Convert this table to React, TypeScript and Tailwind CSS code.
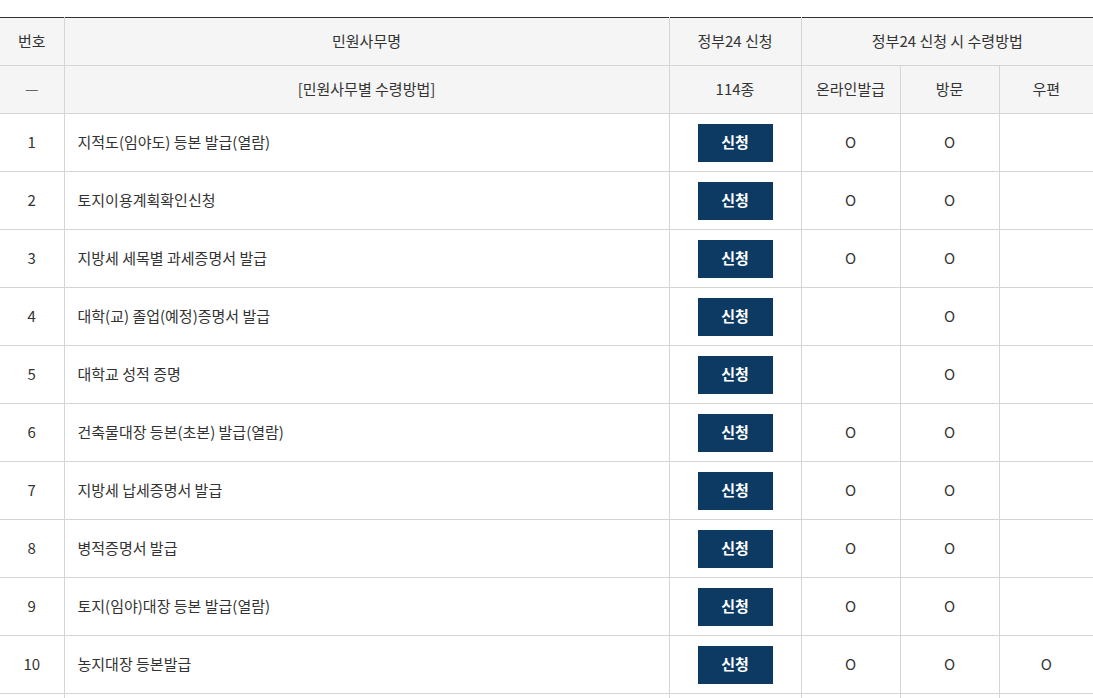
import React from 'react';

type Row = { no: number; name: string; online: boolean; visit: boolean; post: boolean };

const rows: Row[] = [
  { no: 1, name: '지적도(임야도) 등본 발급(열람)', online: true, visit: true, post: false },
  { no: 2, name: '토지이용계획확인신청', online: true, visit: true, post: false },
  { no: 3, name: '지방세 세목별 과세증명서 발급', online: true, visit: true, post: false },
  { no: 4, name: '대학(교) 졸업(예정)증명서 발급', online: false, visit: true, post: false },
  { no: 5, name: '대학교 성적 증명', online: false, visit: true, post: false },
  { no: 6, name: '건축물대장 등본(초본) 발급(열람)', online: true, visit: true, post: false },
  { no: 7, name: '지방세 납세증명서 발급', online: true, visit: true, post: false },
  { no: 8, name: '병적증명서 발급', online: true, visit: true, post: false },
  { no: 9, name: '토지(임야)대장 등본 발급(열람)', online: true, visit: true, post: false },
  { no: 10, name: '농지대장 등본발급', online: true, visit: true, post: true },
  { no: 11, name: '주민등록표 등본(초본) 교부', online: true, visit: true, post: false },
];

const th = 'border border-[#d5d5d5] bg-[#f5f5f5] font-normal text-[15px] text-[#333] text-center h-[48px] p-0';
const td = 'border border-[#d5d5d5] text-[15px] text-[#333] h-[58px] p-0';

export default function App() {
  return (
    <div className="w-[1093px] bg-white pt-[17px] font-['Noto_Sans_CJK_KR','Noto_Sans',sans-serif] overflow-hidden">
      <table className="w-[1093px] table-fixed border-collapse border-t border-t-[#333]">
        <colgroup>
          <col className="w-[64px]" />
          <col className="w-[605px]" />
          <col className="w-[132px]" />
          <col className="w-[99px]" />
          <col className="w-[99px]" />
          <col className="w-[94px]" />
        </colgroup>
        <thead>
          <tr>
            <th className={`${th} border-l-0 border-t-[#333]`}>번호</th>
            <th className={`${th} border-t-[#333]`}>민원사무명</th>
            <th className={`${th} border-t-[#333]`}>정부24 신청</th>
            <th className={`${th} border-r-0 border-t-[#333]`} colSpan={3}>정부24 신청 시 수령방법</th>
          </tr>
          <tr>
            <th className={`${th} border-l-0 text-[#666]`}>—</th>
            <th className={th}>[민원사무별 수령방법]</th>
            <th className={th}>114종</th>
            <th className={th}>온라인발급</th>
            <th className={th}>방문</th>
            <th className={`${th} border-r-0`}>우편</th>
          </tr>
        </thead>
        <tbody>
          {rows.map((r) => (
            <tr key={r.no}>
              <td className={`${td} border-l-0 text-center`}>{r.no}</td>
              <td className={`${td} pl-[13px]`}>{r.name}</td>
              <td className={`${td} text-center`}>
                <button className="inline-flex items-center justify-center w-[75px] h-[38px] bg-[#0d3a63] text-white text-[15px] font-bold align-middle">
                  신청
                </button>
              </td>
              <td className={`${td} text-center`}>{r.online ? 'O' : ''}</td>
              <td className={`${td} text-center`}>{r.visit ? 'O' : ''}</td>
              <td className={`${td} border-r-0 text-center`}>{r.post ? 'O' : ''}</td>
            </tr>
          ))}
        </tbody>
      </table>
    </div>
  );
}
